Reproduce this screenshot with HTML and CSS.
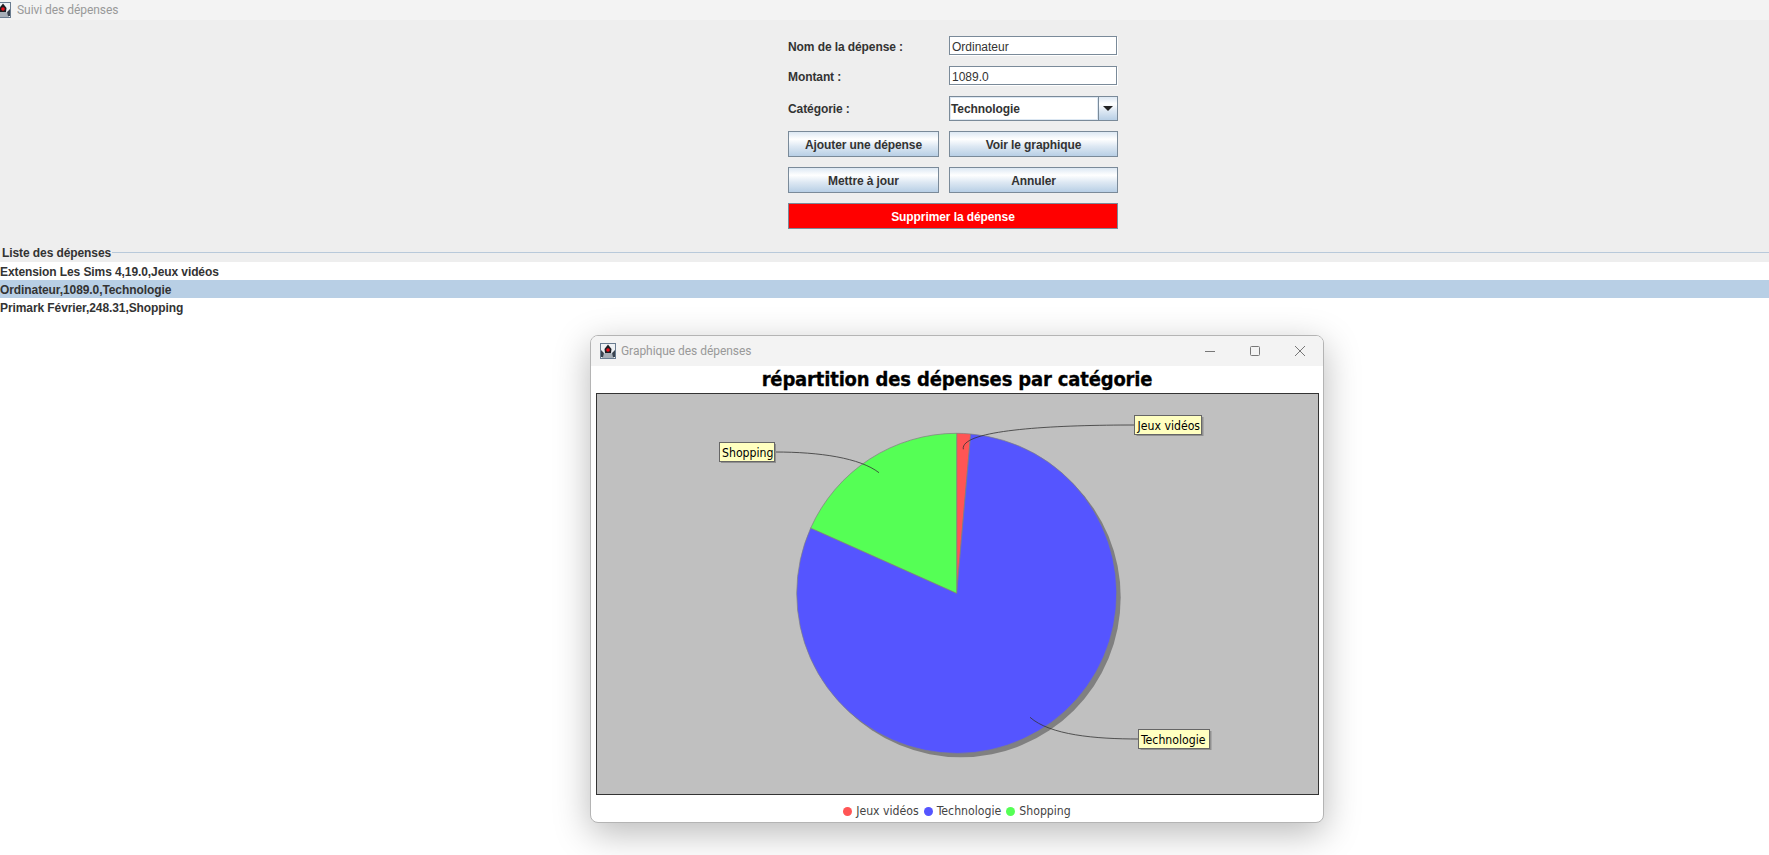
FILE: index.html
```html
<!DOCTYPE html>
<html lang="fr">
<head>
<meta charset="utf-8">
<title>Suivi des dépenses</title>
<link rel="stylesheet" href="styles.css">
</head>
<body>
<header class="titlebar main-titlebar">
  <svg class="duke duke-cropped" viewBox="0 0 16 16" aria-hidden="true"><use href="#duke"></use></svg>
  <span class="titlebar-text">Suivi des dépenses</span>
</header>
<svg class="defs" aria-hidden="true">
  <symbol id="duke" viewBox="0 0 16 16">
    <rect x="0.5" y="0.5" width="15" height="15" fill="#eef1f4" stroke="#6a7c90"/>
    <path d="M2 12 L5 10 L11 10 L14 12 L14 15 L2 15 Z" fill="#a7afb8"/>
    <path d="M8 1.5 L11.5 6 L11 10 L5 10 L4.5 6 Z" fill="#1d1d22"/>
    <path d="M1 7 L4 10 L3 14 L1 14 Z M15 7 L12 10 L13 14 L15 14 Z" fill="#39434f"/>
    <circle cx="8" cy="7" r="1.8" fill="#f0101c"/>
  </symbol>
</svg>
<main class="panel">
  <form class="form">
    <label class="label">Nom de la dépense :</label>
    <div class="field">Ordinateur</div>
    <label class="label">Montant :</label>
    <div class="field">1089.0</div>
    <label class="label label-combo">Catégorie :</label>
    <div class="combo">
      <span class="combo-value">Technologie</span>
      <span class="combo-arrow"><i class="triangle"></i></span>
    </div>
    <div class="btn">Ajouter une dépense</div>
    <div class="btn">Voir le graphique</div>
    <div class="btn">Mettre à jour</div>
    <div class="btn">Annuler</div>
    <div class="btn btn-danger">Supprimer la dépense</div>
  </form>
  <div class="list-title"><span>Liste des dépenses</span><i class="list-rule"></i></div>
</main>
<ul class="list">
  <li>Extension Les Sims 4,19.0,Jeux vidéos</li>
  <li class="selected">Ordinateur,1089.0,Technologie</li>
  <li>Primark Février,248.31,Shopping</li>
</ul>

<section class="window">
  <header class="titlebar window-titlebar">
    <svg class="duke" viewBox="0 0 16 16" aria-hidden="true"><use href="#duke"></use></svg>
    <span class="titlebar-text">Graphique des dépenses</span>
    <div class="controls">
      <svg viewBox="0 0 10 10" aria-hidden="true"><path d="M0 5.5H10"/></svg>
      <svg viewBox="0 0 10 10" aria-hidden="true"><rect x="0.5" y="0.5" width="9" height="9" rx="1"/></svg>
      <svg viewBox="0 0 10 10" aria-hidden="true"><path d="M0 0L10 10M10 0L0 10"/></svg>
    </div>
  </header>
  <h1 class="chart-title">répartition des dépenses par catégorie</h1>
  <svg class="plot" viewBox="597 394 721 400">
    <circle cx="960.7" cy="597.3" r="160" fill="#808080"/>
    <path class="slice" d="M956.7 593.3 L956.7 433.3 A160 160 0 0 1 970.7 434 Z" fill="#ff5555"/>
    <path class="slice" d="M956.7 593.3 L970.7 434 A160 160 0 1 1 810.7 528 Z" fill="#5555ff"/>
    <path class="slice" d="M956.7 593.3 L810.7 528 A160 160 0 0 1 956.7 433.3 Z" fill="#55ff55"/>
    <path class="link" d="M1134.7 425 C1050 425 960 430 963.3 449.3"/>
    <path class="link" d="M775 452 C820 452 860 458 879 472.7"/>
    <path class="link" d="M1138.6 739 C1095 739 1050 735 1030 717.3"/>
    <rect class="tag-shadow" x="1136.5" y="417" width="67" height="19"/>
    <rect class="tag" x="1134.5" y="415.5" width="67" height="19"/>
    <text class="tag-text" x="1137.5" y="429.5">Jeux vidéos</text>
    <rect class="tag-shadow" x="721" y="444" width="55" height="19"/>
    <rect class="tag" x="719.5" y="442.5" width="55" height="19"/>
    <text class="tag-text" x="722" y="456.5">Shopping</text>
    <rect class="tag-shadow" x="1140.5" y="731" width="71" height="19"/>
    <rect class="tag" x="1138.5" y="729.5" width="71" height="19"/>
    <text class="tag-text" x="1141" y="743.5">Technologie</text>
  </svg>
  <footer class="legend">
    <span class="legend-item"><i class="dot dot-red"></i>Jeux vidéos</span>
    <span class="legend-item"><i class="dot dot-blue"></i>Technologie</span>
    <span class="legend-item"><i class="dot dot-green"></i>Shopping</span>
  </footer>
</section>
</body>
</html>
```
FILE: styles.css
```css
* { box-sizing: border-box; }
html, body { margin: 0; height: 855px; overflow: hidden; background: #fff; }
body { font: 12px "Liberation Sans", Arial, sans-serif; color: #333; position: relative; }
.defs { position: absolute; width: 0; height: 0; }

.titlebar { display: flex; align-items: center; background: #f3f3f3; }
.titlebar-text { font-family: Roboto, "Noto Sans", sans-serif; font-size: 12px; letter-spacing: -.05px; color: #999; }
.main-titlebar { height: 20px; overflow: hidden; }
.main-titlebar .titlebar-text { margin-left: 6px; }
.duke { width: 16px; height: 16px; flex: none; }
.duke-cropped { margin-left: -5px; }

.panel { background: #eee; height: 242px; padding-top: 16px; }
.form {
  margin-left: 788px;
  width: 330px;
  display: grid;
  grid-template-columns: 151px 169px;
  grid-template-rows: 20px 20px 25px 26px 26px 26px;
  gap: 10px;
  font-weight: bold;
  letter-spacing: -.09px;
}
.label { align-self: center; padding-top: 2px; }
.label-combo { padding-top: 0; }
.field {
  width: 168px;
  height: 19px;
  background: #fff;
  border: 1px solid #7a8a99;
  box-shadow: 1px 1px 0 #fff;
  padding-left: 2px;
  line-height: 20px;
  font-weight: normal;
  letter-spacing: 0;
}
.combo { display: flex; border: 1px solid #7a8a99; }
.combo-value {
  flex: 1;
  background: #fff;
  border: 1px solid #dde8f3;
  line-height: 22px;
}
.combo-arrow {
  width: 19px;
  flex: none;
  border-left: 1px solid #7a8a99;
  background: linear-gradient(#dde8f3, #fff 30%, #dde8f3 60%, #b8cfe5);
  display: flex;
  align-items: center;
  justify-content: center;
}
.triangle { border: 5px solid transparent; border-top-color: #222; border-bottom: 0; }
.btn {
  display: flex;
  align-items: center;
  justify-content: center;
  padding-top: 2px;
  border: 1px solid #7a8a99;
  background: linear-gradient(#dde8f3, #fff 30%, #dde8f3 60%, #b8cfe5);
}
.btn-danger { grid-column: 1 / -1; background: #f00; color: #fff; }

.list-title { display: flex; align-items: center; height: 17px; margin-top: 15px; padding-left: 2px; font-weight: bold; letter-spacing: -.09px; }
.list-rule { flex: 1; height: 1px; margin-left: 1px; background: #b8c9da; }
.list { list-style: none; margin: 0; padding: 0; font-weight: bold; letter-spacing: -.09px; }
.list li { height: 18px; line-height: 20px; }
.list .selected { background: #b8cfe5; }

.window {
  position: absolute;
  left: 590px;
  top: 335px;
  width: 734px;
  height: 488px;
  background: #fff;
  border: 1px solid #b4b4b4;
  border-radius: 8px;
  box-shadow: 0 10px 36px rgba(0, 0, 0, .28);
  overflow: hidden;
  display: flex;
  flex-direction: column;
}
.window-titlebar { height: 30px; flex: none; padding-left: 9px; }
.window-titlebar .titlebar-text { margin-left: 5px; }
.controls { margin-left: auto; display: flex; gap: 35px; padding-right: 18px; }
.controls svg { width: 10px; height: 10px; fill: none; stroke: #777; stroke-width: 1; }
.chart-title {
  margin: 0;
  height: 27px;
  flex: none;
  text-align: center;
  font: bold 20px/27px "DejaVu Sans", sans-serif;
  font-stretch: condensed;
  letter-spacing: -.17px;
  -webkit-text-stroke: .3px #000;
  color: #000;
}
.plot {
  flex: none;
  width: 723px;
  height: 402px;
  margin-left: 5px;
  background: #c0c0c0;
  border: 1px solid #333;
  display: block;
}
.slice { stroke: #808080; stroke-width: .7; }
.link { fill: none; stroke: #333; stroke-width: .8; }
.tag { fill: #ffffc0; stroke: #666; stroke-width: 1; }
.tag-shadow { fill: #909090; }
.tag-text { font: 12.2px "DejaVu Sans", sans-serif; font-stretch: condensed; fill: #000; }
.legend {
  flex: 1;
  display: flex;
  justify-content: center;
  align-items: center;
  gap: 5px;
  padding-top: 5px;
  font: 12.2px "DejaVu Sans", sans-serif;
  font-stretch: condensed;
  color: #444;
}
.legend-item { display: flex; align-items: center; gap: 4px; }
.dot { width: 9px; height: 9px; border-radius: 50%; }
.dot-red { background: #ff5555; }
.dot-blue { background: #5555ff; }
.dot-green { background: #55ff55; }
```
